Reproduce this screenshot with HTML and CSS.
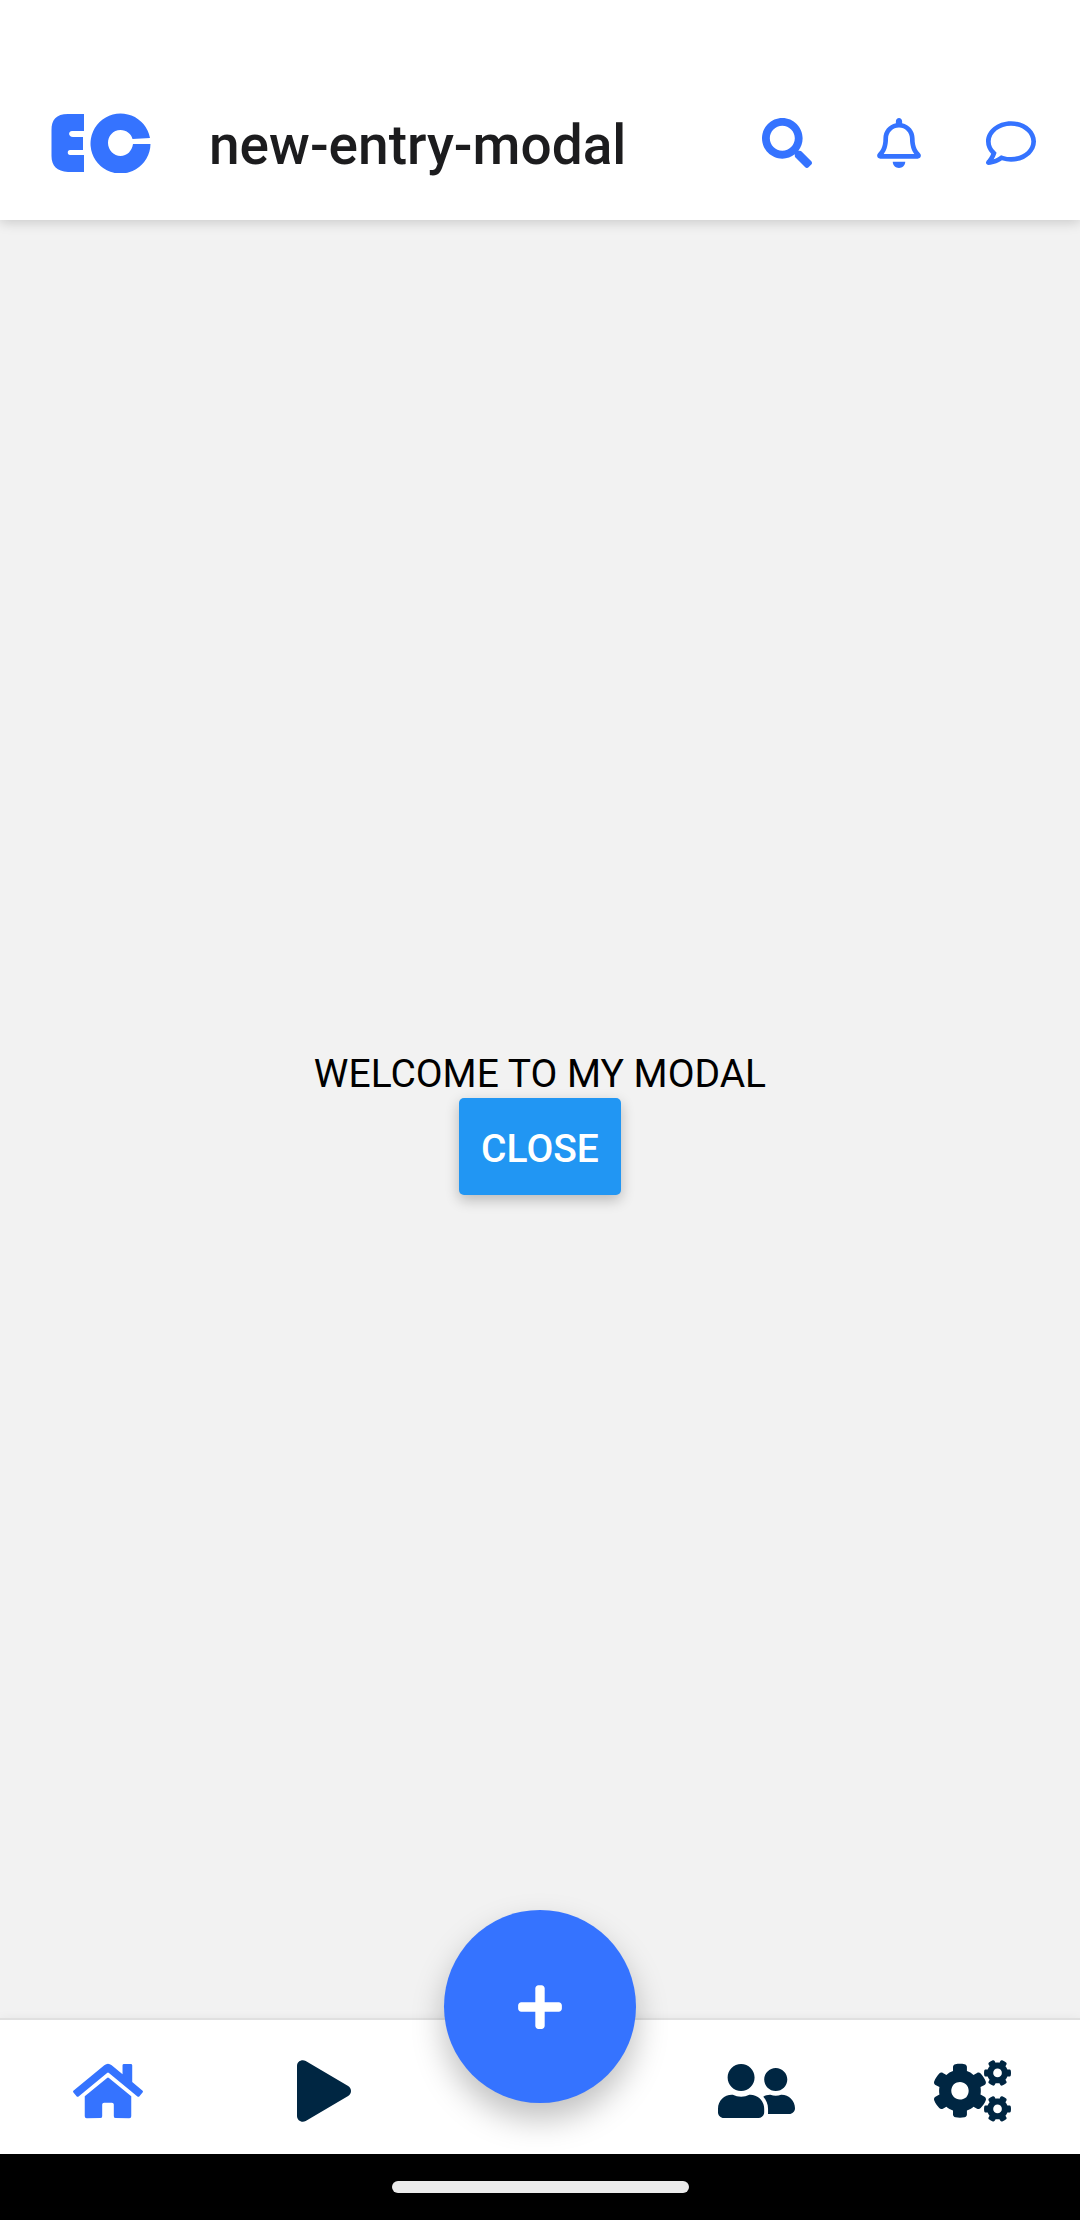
FILE: index.html
```html
<!DOCTYPE html>
<html lang="en">
<head>
<meta charset="utf-8">
<meta name="viewport" content="width=device-width, initial-scale=1">
<title>new-entry-modal</title>
<link rel="stylesheet" href="styles.css">
</head>
<body>
<div class="app">
  <header class="header">
    <a class="logo" href="#" aria-label="EC home">
      <svg width="100" height="60" viewBox="0 0 100 60" aria-hidden="true">
        <path d="M33 1H17C5 1 .5 7 .5 17v26C.5 53 6 58 17 59h16V42H19c-3 0-3-5 0-5h13V24H22c-5 0-5-6-1-6h12z"/>
        <path d="M99 25A30 30 0 1 0 99.500 31H82C81 38 76 43 69.500 43S57 37 57 30s5-13 12.500-13c6 0 11 4 12 9z"/>
      </svg>
    </a>
    <h1 class="title">new-entry-modal</h1>
    <div class="actions">
      <button class="icon-button" type="button" aria-label="Search">
        <svg width="50" height="50" viewBox="0 0 512 512"><path d="M505 442.7L405.300 343c-4.500-4.500-10.600-7-17-7H372c27.600-35.300 44-79.700 44-128C416 93.100 322.900 0 208 0S0 93.100 0 208s93.100 208 208 208c48.300 0 92.700-16.400 128-44v16.300c0 6.400 2.500 12.500 7 17l99.700 99.700c9.400 9.400 24.600 9.400 33.900 0l28.300-28.300c9.400-9.400 9.400-24.600.1-34zM208 336c-70.700 0-128-57.200-128-128 0-70.700 57.200-128 128-128 70.700 0 128 57.200 128 128 0 70.700-57.200 128-128 128z"/></svg>
      </button>
      <button class="icon-button" type="button" aria-label="Notifications">
        <svg width="44" height="50" viewBox="0 0 448 512"><path d="M439.390 362.290c-19.320-20.760-55.470-51.990-55.470-154.290 0-77.700-54.480-139.900-127.940-155.160V32c0-17.670-14.320-32-31.980-32s-31.980 14.330-31.980 32v20.840C118.560 68.100 64.080 130.300 64.080 208c0 102.300-36.150 133.530-55.470 154.290-6 6.450-8.660 14.160-8.610 21.710.11 16.400 12.980 32 32.100 32h383.800c19.120 0 32-15.600 32.100-32 .05-7.550-2.610-15.270-8.610-21.710zM67.530 368c21.220-27.970 44.420-74.330 44.530-159.420 0-.2-.06-.38-.06-.58 0-61.860 50.140-112 112-112s112 50.140 112 112c0 .2-.06.38-.06.58.11 85.100 23.310 131.460 44.530 159.420H67.530zM224 512c35.320 0 63.970-28.650 63.970-64H160.030c0 35.350 28.650 64 63.970 64z"/></svg>
      </button>
      <button class="icon-button" type="button" aria-label="Messages">
        <svg width="50" height="50" viewBox="0 0 512 512"><path d="M256 32C114.600 32 0 125.100 0 240c0 47.600 19.900 91.200 52.900 126.300C38 405.700 7 439.100 6.500 439.500c-6.600 7-8.400 17.200-4.600 26S14.400 480 24 480c61.500 0 110-25.700 139.100-46.300C192 442.800 223.200 448 256 448c141.400 0 256-93.100 256-208S397.400 32 256 32zm0 368c-26.700 0-53.100-4.100-78.400-12.100l-22.700-7.200-19.500 13.800c-14.300 10.100-33.900 21.400-57.500 29 7.300-12.100 14.400-25.700 19.900-40.200l10.600-28.100-20.600-21.800C69.700 314.100 48 282.200 48 240c0-88.200 93.300-160 208-160s208 71.800 208 160-93.300 160-208 160z"/></svg>
      </button>
    </div>
  </header>

  <main class="content">
    <p class="message">WELCOME TO MY MODAL</p>
    <button class="close" type="button">CLOSE</button>
  </main>

  <nav class="tabs" aria-label="Main">
    <a class="tab tab-active" href="#" aria-label="Home" aria-current="page">
      <svg width="70" height="62" viewBox="0 0 576 512"><path d="M280.370 148.260L96 300.110V464a16 16 0 0 0 16 16l112.060-.29a16 16 0 0 0 15.920-16V368a16 16 0 0 1 16-16h64a16 16 0 0 1 16 16v95.640a16 16 0 0 0 16 16.050L464 480a16 16 0 0 0 16-16V300L295.670 148.260a12.190 12.190 0 0 0-15.300 0zM571.600 251.470L488 182.560V44.050a12 12 0 0 0-12-12h-56a12 12 0 0 0-12 12v72.610L318.470 43a48 48 0 0 0-61 0L4.340 251.470a12 12 0 0 0-1.600 16.900l25.500 31A12 12 0 0 0 45.150 301l235.220-193.740a12.190 12.190 0 0 1 15.300 0L530.900 301a12 12 0 0 0 16.900-1.600l25.500-31a12 12 0 0 0-1.700-16.930z"/></svg>
    </a>
    <a class="tab" href="#" aria-label="Play">
      <svg width="54" height="62" viewBox="0 0 448 512"><path d="M424.400 214.700L72.400 6.600C43.800-10.300 0 6.100 0 47.900V464c0 37.500 40.700 60.100 72.400 41.300l352-208c31.400-18.500 31.500-64.100 0-82.600z"/></svg>
    </a>
    <div class="tab tab-center">
      <button class="fab" type="button" aria-label="New entry">
        <svg width="44" height="50" viewBox="0 0 448 512"><path d="M416 208H272V64c0-17.670-14.330-32-32-32h-32c-17.670 0-32 14.330-32 32v144H32c-17.670 0-32 14.330-32 32v32c0 17.670 14.330 32 32 32h144v144c0 17.670 14.330 32 32 32h32c17.670 0 32-14.330 32-32V304h144c17.670 0 32-14.330 32-32v-32c0-17.670-14.330-32-32-32z"/></svg>
      </button>
    </div>
    <a class="tab" href="#" aria-label="Friends">
      <svg width="77" height="62" viewBox="0 0 640 512"><path d="M192 256c61.900 0 112-50.100 112-112S253.900 32 192 32 80 82.100 80 144s50.100 112 112 112zm76.800 32h-8.300c-20.800 10-43.900 16-68.500 16s-47.600-6-68.500-16h-8.300C51.600 288 0 339.600 0 403.200V432c0 26.500 21.500 48 48 48h288c26.500 0 48-21.500 48-48v-28.800c0-63.600-51.600-115.200-115.200-115.200zM480 256c53 0 96-43 96-96s-43-96-96-96-96 43-96 96 43 96 96 96zm48 32h-3.800c-13.900 4.800-28.600 8-44.200 8s-30.300-3.200-44.200-8H432c-20.400 0-39.200 5.900-55.700 15.400 24.400 26.300 39.700 61.200 39.700 99.800v38.400c0 2.200-.5 4.300-.6 6.400H592c26.500 0 48-21.500 48-48 0-61.900-50.100-112-112-112z"/></svg>
    </a>
    <a class="tab" href="#" aria-label="Settings">
      <svg width="77" height="62" viewBox="0 0 640 512">
        <defs><path id="small-cog" d="M512.100 191l-8.200 14.300c-3 5.300-9.400 7.500-15.100 5.400-11.800-4.400-22.600-10.700-32.100-18.600-4.600-3.800-5.800-10.500-2.800-15.700l8.200-14.300c-6.900-8-12.300-17.300-15.900-27.400h-16.500c-6 0-11.200-4.300-12.200-10.300-2-12-2.100-24.600 0-37.100 1-6 6.200-10.400 12.200-10.400h16.500c3.600-10.100 9-19.400 15.900-27.400l-8.200-14.300c-3-5.200-1.900-11.900 2.800-15.700 9.500-7.900 20.400-14.200 32.100-18.600 5.700-2.100 12.100.1 15.100 5.400l8.200 14.300c10.500-1.900 21.200-1.900 31.700 0L552 6.300c3-5.300 9.400-7.500 15.100-5.400 11.800 4.400 22.600 10.700 32.100 18.600 4.600 3.800 5.800 10.500 2.800 15.700l-8.200 14.300c6.900 8 12.300 17.300 15.900 27.400h16.500c6 0 11.200 4.300 12.200 10.300 2 12 2.100 24.600 0 37.100-1 6-6.200 10.400-12.200 10.400h-16.500c-3.600 10.100-9 19.400-15.900 27.400l8.200 14.300c3 5.200 1.900 11.900-2.800 15.700-9.500 7.900-20.400 14.200-32.100 18.600-5.700 2.100-12.100-.1-15.100-5.400l-8.200-14.300c-10.400 1.900-21.200 1.900-31.700 0zm-10.500-58.800c38.500 29.600 82.400-14.300 52.800-52.800-38.500-29.700-82.400 14.300-52.800 52.800z"/></defs>
        <use href="#small-cog"/>
        <use href="#small-cog" y="299"/>
        <path d="M386.300 286.100l33.700 16.800c10.100 5.800 14.500 18.100 10.500 29.100-8.900 24.200-26.400 46.400-42.600 65.800-7.400 8.900-20.200 11.100-30.300 5.300l-29.100-16.800c-16 13.700-34.600 24.600-54.900 31.700v33.600c0 11.600-8.300 21.600-19.700 23.600-24.600 4.200-50.400 4.400-75.900 0-11.500-2-20-11.900-20-23.600V418c-20.300-7.200-38.900-18-54.900-31.700L74 403c-10 5.800-22.900 3.600-30.300-5.300-16.200-19.400-33.300-41.600-42.200-65.700-4-10.900.4-23.200 10.500-29.100l33.300-16.800c-3.900-20.900-3.900-42.400 0-63.400L12 205.800c-10.100-5.800-14.600-18.100-10.500-29 8.900-24.200 26-46.400 42.200-65.800 7.400-8.900 20.200-11.100 30.300-5.300l29.100 16.800c16-13.700 34.600-24.600 54.900-31.700V57.100c0-11.500 8.200-21.500 19.600-23.500 24.600-4.200 50.500-4.400 76-.1 11.500 2 20 11.900 20 23.600v33.600c20.300 7.200 38.900 18 54.900 31.700l29.100-16.800c10-5.800 22.900-3.600 30.300 5.300 16.200 19.400 33.200 41.600 42.100 65.800 4 10.900.1 23.200-10 29.100l-33.700 16.800c3.900 21 3.900 42.500 0 63.500zm-117.600 21.100c59.200-77-28.700-164.900-105.700-105.700-59.200 77 28.700 164.900 105.700 105.700z"/>
      </svg>
    </a>
  </nav>

  <div class="system-bar"><div class="handle"></div></div>
</div>
</body>
</html>
```

FILE: styles.css
```css
* {
  box-sizing: border-box;
}

body {
  margin: 0;
  background: #f2f2f2;
  font-family: Roboto, "Noto Sans", sans-serif;
}

svg {
  display: block;
  fill: currentColor;
}

button {
  border: 0;
  padding: 0;
  font-family: inherit;
  cursor: pointer;
}

.app {
  display: flex;
  flex-direction: column;
  min-height: 100vh;
}

.header {
  display: flex;
  align-items: center;
  padding: 66px 44px 0 51px;
  min-height: 220px;
  background: #fff;
  box-shadow: 0 2px 12px rgba(0, 0, 0, 0.18);
}

.logo {
  color: #3573ff;
}

.title {
  flex: 1;
  margin: 0 0 0 58px;
  padding-top: 3px;
  font-size: 55px;
  line-height: 64px;
  font-weight: 500;
  color: #1c1c1e;
}

.actions {
  display: flex;
  gap: 65px;
}

.icon-button {
  background: none;
  color: #3573ff;
}

.content {
  flex: 1;
  display: flex;
  flex-direction: column;
  align-items: center;
  justify-content: center;
  padding-top: 6px;
}

.message {
  margin: 0;
  font-size: 39px;
  line-height: 48px;
  color: #000;
}

.close {
  padding: 28px 22px 23px;
  border-radius: 5px;
  background: #2196f3;
  color: #fff;
  font-size: 39px;
  line-height: 46px;
  font-weight: 500;
  box-shadow: 0 5px 14px rgba(0, 0, 0, 0.24);
}

.tabs {
  display: grid;
  grid-template-columns: repeat(5, 1fr);
  height: 136px;
  border-top: 2px solid #e0e0e0;
  background: #fff;
  box-shadow: 0 0 10px rgba(0, 0, 0, 0.05);
}

.tab {
  display: flex;
  align-items: center;
  justify-content: center;
  padding-top: 8px;
  color: #002642;
}

.tab-active {
  color: #3573ff;
}

.tab-center {
  position: relative;
}

/* Floating action button overlaps the top edge of the tab bar */
.fab {
  position: absolute;
  bottom: 51px;
  display: flex;
  align-items: center;
  justify-content: center;
  width: 192px;
  height: 193px;
  border-radius: 50%;
  background: #3573ff;
  color: #fff;
  box-shadow: 0 16px 32px rgba(0, 0, 0, 0.25);
}

.system-bar {
  display: flex;
  justify-content: center;
  padding: 27px 0;
  background: #000;
}

.handle {
  width: 297px;
  height: 12px;
  border-radius: 6px;
  background: #ebebeb;
}
```
